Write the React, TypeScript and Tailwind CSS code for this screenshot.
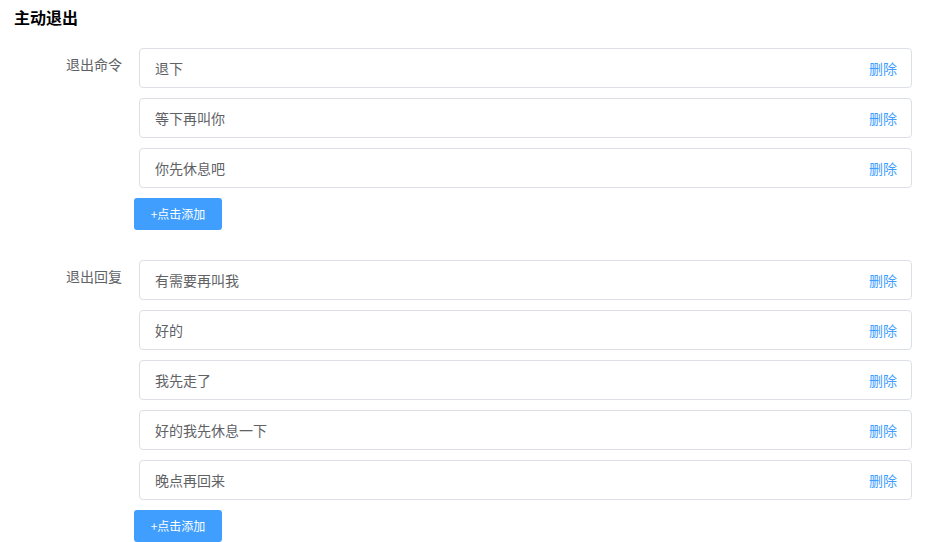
import React from "react";

const font = { fontFamily: '"Noto Sans CJK SC", "Noto Sans", sans-serif' };

function Section({ label, items }: { label: string; items: string[] }) {
  return (
    <div className="flex">
      <div className="w-[122px] shrink-0 text-right text-[14px] leading-[32px] text-[#606266]">{label}</div>
      <div className="ml-[17px] w-[773px] flex flex-col">
        {items.map((t) => (
          <div
            key={t}
            className="mb-[10px] h-[40px] flex items-center justify-between rounded-[4px] border border-[#dcdfe6] bg-white pl-[15px] pr-[14px]"
          >
            <span className="text-[14px] text-[#606266]">{t}</span>
            <span className="text-[14px] text-[#409eff]">删除</span>
          </div>
        ))}
        <button className="-ml-[5px] h-[32px] w-[88px] rounded-[3px] bg-[#409eff] text-[12px] text-white">
          +点击添加
        </button>
      </div>
    </div>
  );
}

export default function App() {
  return (
    <div className="w-[940px] h-[542px] bg-white overflow-hidden" style={font}>
      <div className="pl-[14px] pt-[5px] h-[48px] text-[16px] font-bold leading-[24px] text-black">主动退出</div>
      <div className="flex flex-col gap-[30px]">
        <Section label="退出命令" items={["退下", "等下再叫你", "你先休息吧"]} />
        <Section label="退出回复" items={["有需要再叫我", "好的", "我先走了", "好的我先休息一下", "晚点再回来"]} />
      </div>
    </div>
  );
}
